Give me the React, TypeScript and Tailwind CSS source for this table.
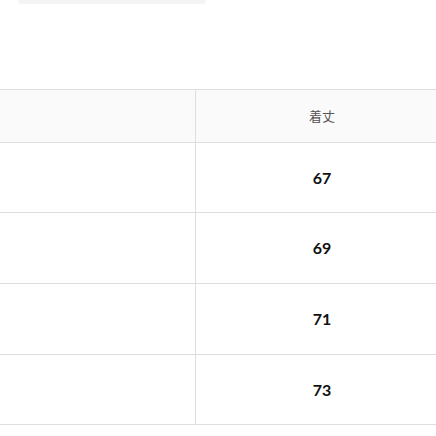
import React from "react";

export default function App() {
  const rows = [
    { v: "67", h: "h-[70px]" },
    { v: "69", h: "h-[71px]" },
    { v: "71", h: "h-[71px]" },
    { v: "73", h: "h-[70px]" },
  ];
  return (
    <div className="w-[436px] h-[436px] overflow-hidden bg-white relative" style={{ fontFamily: "Lato, 'Noto Sans CJK JP', sans-serif" }}>
      <div className="ml-[18px] w-[188px] h-[4px] bg-[#f4f4f4] rounded-b-[3px]" />
      <div className="mt-[85px] w-[448px] border-t border-[#dedede]">
        <div className="grid grid-cols-[196px_252px] h-[53px] bg-[#fafafa] border-b border-[#dedede]">
          <div className="border-r border-[#dedede]" />
          <div className="flex items-center justify-center text-[13px] text-[#555]" style={{ fontFamily: "'Noto Sans CJK JP', sans-serif" }}>着丈</div>
        </div>
        {rows.map((r) => (
          <div key={r.v} className={`grid grid-cols-[196px_252px] ${r.h} border-b border-[#dedede]`}>
            <div className="border-r border-[#dedede]" />
            <div className="flex items-center justify-center text-[16px] font-bold text-[#111]">{r.v}</div>
          </div>
        ))}
      </div>
    </div>
  );
}
